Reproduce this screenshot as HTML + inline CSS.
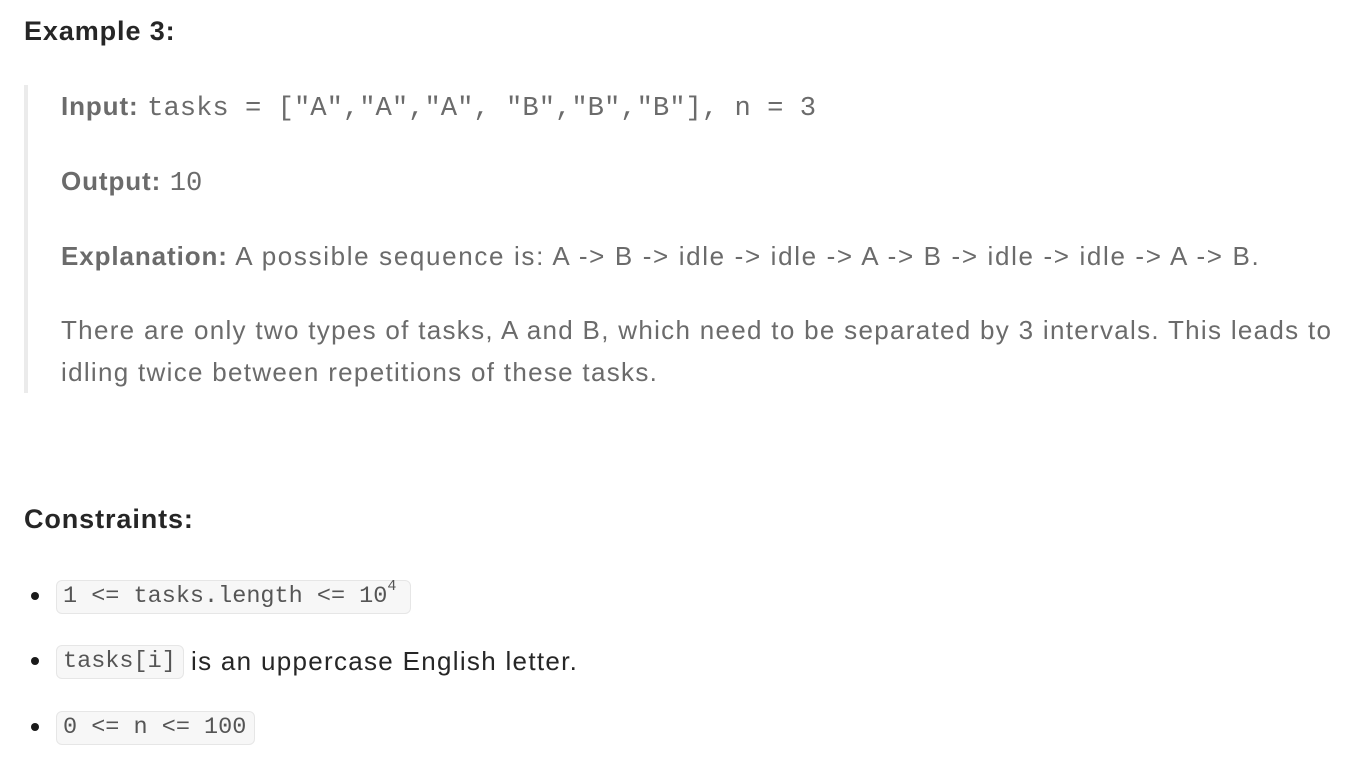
<!DOCTYPE html>
<html><head><meta charset="utf-8"><style>
body{margin:0;width:1372px;height:772px;background:#fff;font-family:"Liberation Sans",Arial,sans-serif;overflow:hidden;position:relative}
.l{position:absolute;white-space:nowrap;line-height:1}
.g{color:#6b6b6b;font-size:26px;letter-spacing:1.3px}
.g b{color:#6b6b6b;letter-spacing:0.9px}
.m{font-family:"Liberation Mono",monospace;letter-spacing:0}
.bar{position:absolute;left:24px;top:85px;width:4px;height:308px;background:#ebebeb}
.dot{position:absolute;left:31px;width:8px;height:8px;border-radius:50%;background:#1a1a1a}
.code{position:absolute;left:56px;height:34px;border:1px solid #e6e6e6;background:#f7f7f7;border-radius:6px;box-sizing:border-box;font-family:"Liberation Mono",monospace;font-size:23.5px;color:#555;line-height:32px;padding-left:6px;white-space:nowrap}
.hd{font-size:27px;font-weight:bold;color:#262626;letter-spacing:0.9px}
</style></head><body>
<div class="l hd" style="left:24px;top:18px">Example 3:</div>
<div class="bar"></div>
<div class="l g" style="left:61px;top:93px"><b>Input:</b> <span class="m" style="font-size:27.2px">tasks = ["A","A","A", "B","B","B"], n = 3</span></div>
<div class="l g" style="left:61px;top:168px"><b>Output:</b> <span class="m" style="font-size:27.2px">10</span></div>
<div class="l g" style="left:61px;top:243px;letter-spacing:1.65px"><b>Explanation:</b> A possible sequence is: A -&gt; B -&gt; idle -&gt; idle -&gt; A -&gt; B -&gt; idle -&gt; idle -&gt; A -&gt; B.</div>
<div class="l g" style="left:61px;top:317px">There are only two types of tasks, A and B, which need to be separated by 3 intervals. This leads to</div>
<div class="l g" style="left:61px;top:359px">idling twice between repetitions of these tasks.</div>
<div class="l hd" style="left:24px;top:506px">Constraints:</div>
<div class="dot" style="top:592px"></div>
<div class="code" style="top:580px;width:355px">1 &lt;= tasks.length &lt;= 10<sup style="font-size:15px;position:relative;top:-4px;vertical-align:top;line-height:20px">4</sup></div>
<div class="dot" style="top:657px"></div>
<div class="code" style="top:645px;width:128px">tasks[i]</div>
<div class="l" style="left:191px;top:648px;font-size:26px;letter-spacing:1.3px;color:#262626">is an uppercase English letter.</div>
<div class="dot" style="top:723px"></div>
<div class="code" style="top:711px;width:199px">0 &lt;= n &lt;= 100</div>
</body></html>
